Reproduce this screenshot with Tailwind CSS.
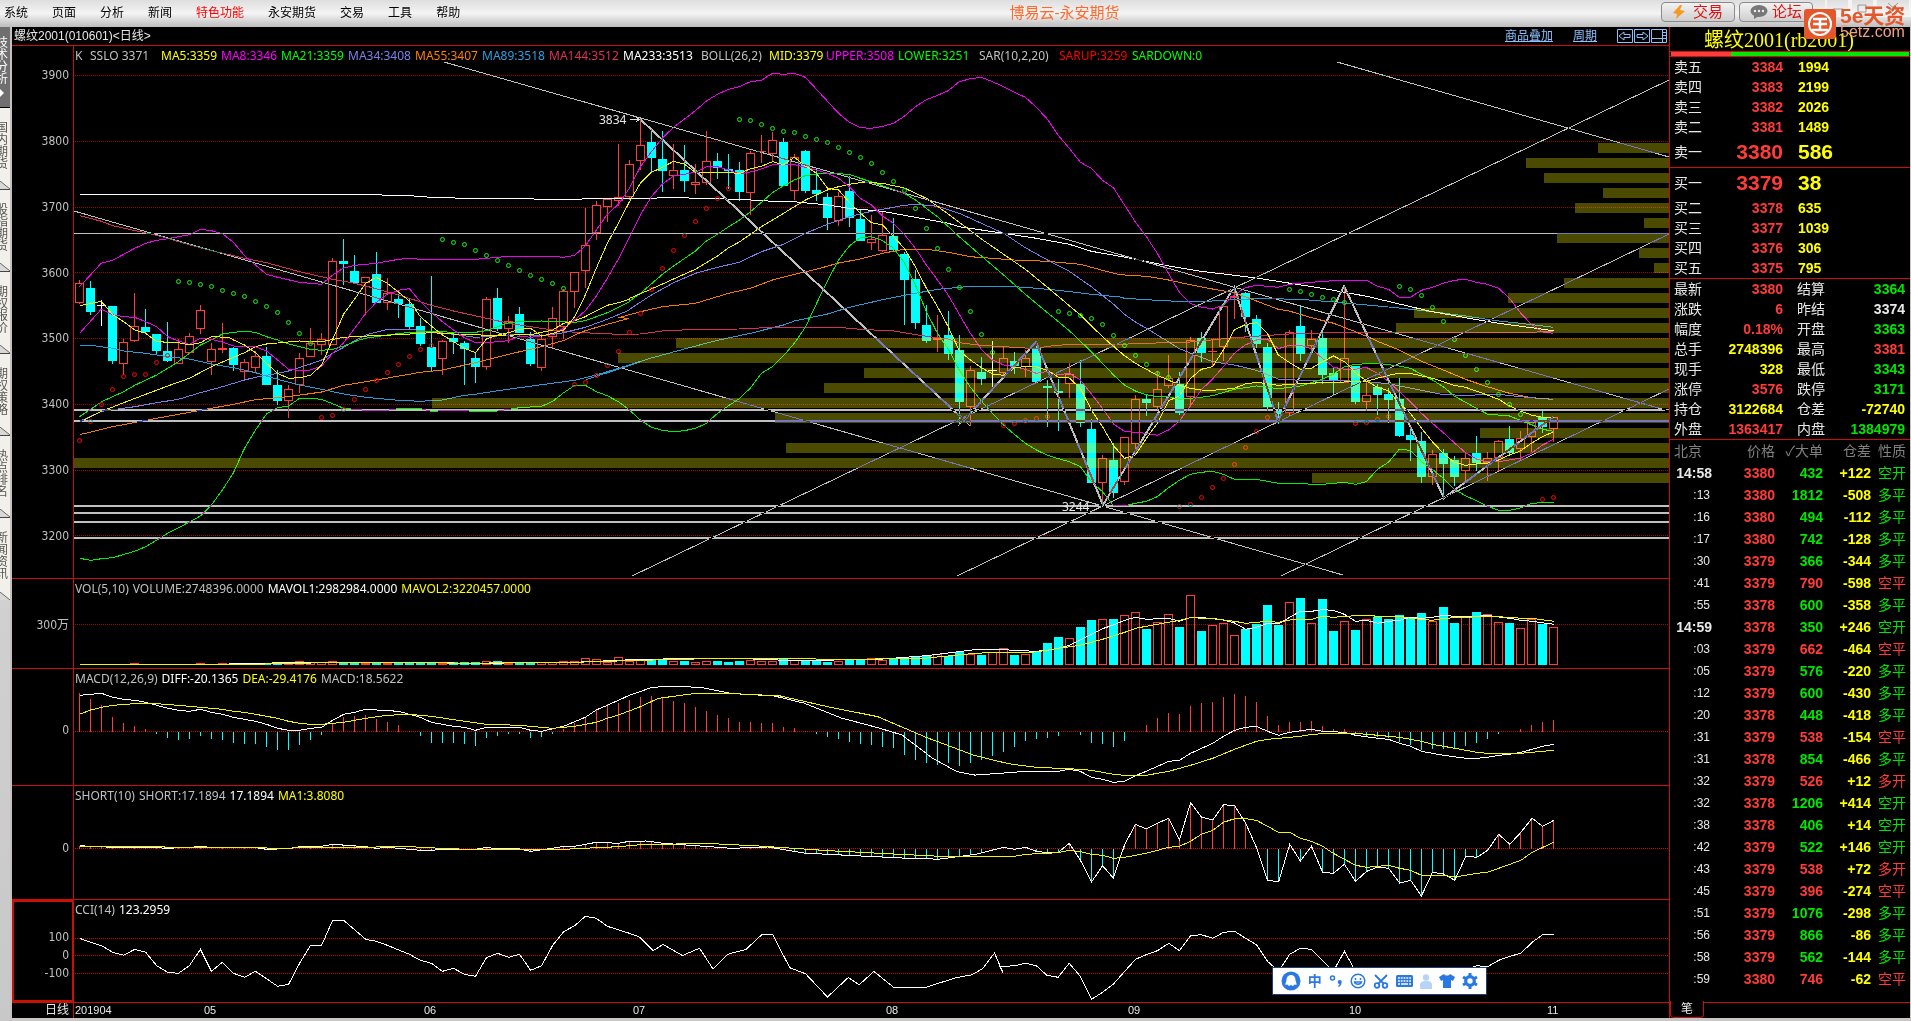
<!DOCTYPE html>
<html lang="zh-CN">
<head>
<meta charset="utf-8">
<title>博易云-永安期货</title>
<script src="https://cdn.jsdelivr.net/npm/@tailwindcss/browser@4"></script>
</head>
<body class="min-h-screen flex flex-col bg-[#cac6c6] font-['Liberation_Sans','Noto_Sans_CJK_SC',sans-serif] text-xs text-[#e8e8e8]">

<header class="h-[27px] shrink-0 flex items-start justify-between bg-linear-to-b from-[#dedede] via-[#f4f4f4] to-[#bdbdbd] text-black">
  <nav class="flex-1 flex gap-6 pl-1 leading-[26px] whitespace-nowrap">
    <a href="#">系统</a><a href="#">页面</a><a href="#">分析</a><a href="#">新闻</a><a href="#" class="text-[#ff0000]">特色功能</a><a href="#">永安期货</a><a href="#">交易</a><a href="#">工具</a><a href="#">帮助</a>
  </nav>
  <h1 class="text-[15px] leading-[26px] text-[#ff6a2c] whitespace-nowrap pl-[214px]">博易云-永安期货</h1>
  <div class="flex-1 flex justify-end gap-1 pt-0.5 relative">
    <button class="w-[74px] h-5 flex items-center justify-center gap-2 rounded border border-[#8a8a8a] bg-linear-to-b from-[#f2f2f2] to-[#cfcfcf] text-[15px] text-[#d81414]">
      <svg class="w-3 h-4" viewBox="0 0 12 16"><path d="M7 1 0 9l4 1-1 5 9-8-5-1 2-5z" fill="#f59a22"/></svg>交易</button>
    <button class="w-[74px] h-5 mr-[98px] flex items-center justify-center gap-1 rounded border border-[#8a8a8a] bg-linear-to-b from-[#f2f2f2] to-[#cfcfcf] text-[15px] text-[#d81414]">
      <svg class="w-[18px] h-4" viewBox="0 0 18 16"><ellipse cx="9" cy="7" rx="8.500" ry="6" fill="#777"/><path d="M4 11v4l5-3z" fill="#777"/><circle cx="5" cy="7" r="1.200" fill="#eee"/><circle cx="9" cy="7" r="1.200" fill="#eee"/><circle cx="13" cy="7" r="1.200" fill="#eee"/></svg>论坛</button>
    <svg class="absolute right-0 top-0 w-[86px] h-[18px]" viewBox="0 0 86 18" fill="none" stroke="#f4f4f4" stroke-width="2"><path d="M1 0v16h23V0M26 0v16h23V0M51 0v16h34V0"/><path d="M8 9h10M33 5h8v7h-8zM63 3l10 9M73 3 63 12" stroke="#999" stroke-width="1"/></svg>
    <div class="absolute right-[2px] top-[7px] z-10 flex items-start gap-1">
      <svg class="w-8 h-[30px] mt-[2px]" viewBox="0 0 32 30"><rect width="32" height="30" rx="3" fill="#e4572a"/><circle cx="16" cy="15" r="11" fill="none" stroke="#fff" stroke-width="2"/><path d="M9 10h14M16 10v11M8 21h16M9 15h14" stroke="#fff" stroke-width="2.500"/></svg>
      <div class="w-[69px] whitespace-nowrap">
        <div class="text-[21px] leading-[18px] font-bold text-[#e4572a]">5e天资</div>
        <div class="text-base leading-[14px] text-[#f0a080]">5etz.com</div>
      </div>
    </div>
  </div>
</header>

<main class="flex-1 flex">
  <aside class="w-3 shrink-0 flex flex-col border-r-2 border-[#c8c0c0] bg-linear-to-b from-[#dcdcdc] to-[#c8c8c8] text-[#555] text-xs leading-3">
    <a href="#" class="h-[81px] overflow-hidden flex flex-col items-end justify-center border-b border-black bg-[#6f6f6f] text-white pr-0.5"><span class="w-3">技术分析</span><svg class="w-1 h-2 mt-1 mr-1" viewBox="0 0 4 8"><path d="M0 0l4 4-4 4z" fill="#fff"/></svg></a>
    <a href="#" class="h-[82px] overflow-hidden flex flex-col items-end justify-between border-b border-[#444] bg-[#f1f0ea]"><span class="w-3 mr-0.5 mt-[14px]">国内期货</span><svg class="w-[10px] h-2" viewBox="0 0 10 8"><path d="M0 0l10 8H0z" fill="#d8d8d8"/><path d="M0 0l10 8" stroke="#666"/></svg></a>
    <a href="#" class="h-[82px] overflow-hidden flex flex-col items-end justify-between border-b border-[#444] bg-[#f1f0ea]"><span class="w-3 mr-0.5 mt-[14px]">股指期货</span><svg class="w-[10px] h-2" viewBox="0 0 10 8"><path d="M0 0l10 8H0z" fill="#d8d8d8"/><path d="M0 0l10 8" stroke="#666"/></svg></a>
    <a href="#" class="h-[82px] overflow-hidden flex flex-col items-end justify-between border-b border-[#444] bg-[#f1f0ea]"><span class="w-3 mr-0.5 mt-[14px]">期权报价</span><svg class="w-[10px] h-2" viewBox="0 0 10 8"><path d="M0 0l10 8H0z" fill="#d8d8d8"/><path d="M0 0l10 8" stroke="#666"/></svg></a>
    <a href="#" class="h-[82px] overflow-hidden flex flex-col items-end justify-between border-b border-[#444] bg-[#f1f0ea]"><span class="w-3 mr-0.5 mt-[14px]">期权策略</span><svg class="w-[10px] h-2" viewBox="0 0 10 8"><path d="M0 0l10 8H0z" fill="#d8d8d8"/><path d="M0 0l10 8" stroke="#666"/></svg></a>
    <a href="#" class="h-[82px] overflow-hidden flex flex-col items-end justify-between border-b border-[#444] bg-[#f1f0ea]"><span class="w-3 mr-0.5 mt-[14px]">热点排名</span><svg class="w-[10px] h-2" viewBox="0 0 10 8"><path d="M0 0l10 8H0z" fill="#d8d8d8"/><path d="M0 0l10 8" stroke="#666"/></svg></a>
    <a href="#" class="h-[82px] overflow-hidden flex flex-col items-end justify-between bg-[#f1f0ea]"><span class="w-3 mr-0.5 mt-[14px]">新闻资讯</span><svg class="w-[10px] h-2" viewBox="0 0 10 8"><path d="M0 0l10 8H0z" fill="#d8d8d8"/><path d="M0 0l10 8" stroke="#666"/></svg></a>
  </aside>

  <section class="relative flex-1 min-w-0 mb-[3px] grid grid-rows-[19px_minmax(0,533fr)_minmax(0,90fr)_minmax(0,117fr)_minmax(0,114fr)_minmax(0,103fr)_15px] bg-black">
    <div class="flex items-center justify-between border-b border-[#c81008] pl-0.5 pr-px leading-[18px] whitespace-nowrap">
      <h2>螺纹2001(010601)&lt;日线&gt;</h2>
      <div class="flex items-center gap-5 text-[#8cc0ff]">
        <a href="#" class="underline">商品叠加</a><a href="#" class="underline">周期</a>
        <svg class="w-[51px] h-[15px]" viewBox="0 0 51 15" fill="none" stroke="#8cc0ff"><path d="M.5.500h15v13H.500zM17.500.500h15v13h-15zM34.500.500h15v13h-15zM34.500 9.500h11M45.500.500v13M46 3.500h4M46 6.500h4M46 9.500h4"/><path d="M2 7l5-4v2.500h6v3H7V11zM31 7l-5-4v2.500h-6v3h6V11z"/></svg>
      </div>
    </div>

    <div class="grid grid-cols-[62px_minmax(0,1fr)] border-b border-[#c81008] font-['DejaVu_Sans_Condensed','Noto_Sans_CJK_SC',sans-serif]">
      <div class="flex flex-col justify-between items-end border-r border-[#c81008] pt-[21px] pb-[34px] pr-1 leading-4 text-[#c0c0c0]"><span>3900</span><span>3800</span><span>3700</span><span>3600</span><span>3500</span><span>3400</span><span>3300</span><span>3200</span></div>
      <div class="relative overflow-hidden pt-0.5 pl-px font-['Noto_Sans',sans-serif]">
        <svg id="price" class="absolute inset-0 size-full" viewBox="74 46 1595 532" preserveAspectRatio="none" shape-rendering="crispEdges" fill="none"></svg>
        <div class="relative flex leading-4 whitespace-nowrap text-[#c0c0c0]"><span class="w-[15px]">K</span><span class="w-[71px]">SSLO 3371</span><span class="w-[60px] text-[#ffff00]">MA5:3359</span><span class="w-[60px] text-[#ff00ff]">MA8:3346</span><span class="w-[67px] text-[#00ff00]">MA21:3359</span><span class="w-[67px] text-[#7f7fef]">MA34:3408</span><span class="w-[67px] text-[#ff7f00]">MA55:3407</span><span class="w-[67px] text-[#2fa0e0]">MA89:3518</span><span class="w-[74px] text-[#df3058]">MA144:3512</span><span class="w-[78px] text-white">MA233:3513</span><span class="w-[68px]">BOLL(26,2)</span><span class="w-[57px] text-[#ffff00]">MID:3379</span><span class="w-[72px] text-[#ff00ff]">UPPER:3508</span><span class="w-[81px] text-[#00ff00]">LOWER:3251</span><span class="w-20">SAR(10,2,20)</span><span class="w-[73px] text-[#ff0000]">SARUP:3259</span><span class="text-[#00ff00]">SARDOWN:0</span></div>
      </div>
    </div>

    <div class="grid grid-cols-[62px_minmax(0,1fr)] border-b border-[#c81008] font-['DejaVu_Sans_Condensed','Noto_Sans_CJK_SC',sans-serif]">
      <div class="flex items-center justify-end border-r border-[#c81008] pt-0.5 pr-1 text-[#c0c0c0]">300万</div>
      <div class="relative overflow-hidden pt-0.5 pl-px font-['Noto_Sans',sans-serif]">
        <svg id="vol" class="absolute inset-0 size-full" viewBox="74 579 1595 89" preserveAspectRatio="none" shape-rendering="crispEdges" fill="none"></svg>
        <div class="relative flex gap-1 leading-4 whitespace-nowrap text-[#c0c0c0]"><span>VOL(5,10)</span><span>VOLUME:2748396.0000</span><span class="text-white">MAVOL1:2982984.0000</span><span class="text-[#ffff00]">MAVOL2:3220457.0000</span></div>
      </div>
    </div>

    <div class="grid grid-cols-[62px_minmax(0,1fr)] border-b border-[#c81008] font-['DejaVu_Sans_Condensed','Noto_Sans_CJK_SC',sans-serif]">
      <div class="flex items-center justify-end border-r border-[#c81008] pt-1.5 pr-1 text-[#c0c0c0]">0</div>
      <div class="relative overflow-hidden pt-0.5 pl-px font-['Noto_Sans',sans-serif]">
        <svg id="macd" class="absolute inset-0 size-full" viewBox="74 669 1595 116" preserveAspectRatio="none" shape-rendering="crispEdges" fill="none"></svg>
        <div class="relative flex gap-1 leading-4 whitespace-nowrap text-[#c0c0c0]"><span>MACD(12,26,9)</span><span class="text-white">DIFF:-20.1365</span><span class="text-[#ffff00]">DEA:-29.4176</span><span>MACD:18.5622</span></div>
      </div>
    </div>

    <div class="grid grid-cols-[62px_minmax(0,1fr)] border-b border-[#c81008] font-['DejaVu_Sans_Condensed','Noto_Sans_CJK_SC',sans-serif]">
      <div class="flex items-center justify-end border-r border-[#c81008] pt-2.5 pr-1 text-[#c0c0c0]">0</div>
      <div class="relative overflow-hidden pt-0.5 pl-px font-['Noto_Sans',sans-serif]">
        <svg id="short" class="absolute inset-0 size-full" viewBox="74 786 1595 113" preserveAspectRatio="none" shape-rendering="crispEdges" fill="none"></svg>
        <div class="relative flex gap-1 leading-4 whitespace-nowrap text-[#c0c0c0]"><span>SHORT(10)</span><span>SHORT:17.1894</span><span class="text-white">17.1894</span><span class="text-[#ffff00]">MA1:3.8080</span></div>
      </div>
    </div>

    <div class="grid grid-cols-[62px_minmax(0,1fr)] border-b border-[#c81008] font-['DejaVu_Sans_Condensed','Noto_Sans_CJK_SC',sans-serif]">
      <div class="flex flex-col justify-center items-end border-2 border-[#c81008] pt-2 pr-[3px] leading-[18px] text-[#c0c0c0]"><span>100</span><span>0</span><span>-100</span></div>
      <div class="relative overflow-hidden pt-0.5 pl-px font-['Noto_Sans',sans-serif]">
        <svg id="cci" class="absolute inset-0 size-full" viewBox="74 900 1595 102" preserveAspectRatio="none" shape-rendering="crispEdges" fill="none"></svg>
        <div class="relative flex gap-1 leading-4 whitespace-nowrap text-[#c0c0c0]"><span>CCI(14)</span><span class="text-white">123.2959</span></div>
      </div>
    </div>

    <div class="grid grid-cols-[62px_minmax(0,1fr)] leading-[15px]">
      <div class="border-r border-[#c81008] text-right pr-1">日线</div>
      <div class="grid grid-cols-[129fr_220fr_209fr_253fr_242fr_221fr_198fr_122fr] pl-px text-[11px]"><span>201904</span><span>05</span><span>06</span><span>07</span><span>08</span><span>09</span><span>10</span><span>11</span></div>
    </div>

    <div class="absolute right-[182px] bottom-[23px] w-[215px] h-7 flex items-center justify-around px-1 border border-[#1d3f78] bg-white text-[#2a79e2]">
      <svg class="size-5" viewBox="0 0 20 20"><circle cx="10" cy="10" r="9.500" fill="#2a79e2"/><path d="M10 4c-3 0-4.500 2.500-4.500 5 0 2-1.500 3-1 5l2-.500L8 15l2-1 2 1 1.500-1.500 2 .500c.500-2-1-3-1-5C14.500 6.500 13 4 10 4z" fill="#fff"/></svg>
      <span class="text-sm font-bold">中</span>
      <svg class="size-[14px]" viewBox="0 0 14 14"><circle cx="3.500" cy="4" r="2" fill="none" stroke="#2a79e2" stroke-width="1.500"/><path d="M9 7a2 2 0 1 1 3.500 2c0 2-1.500 3.500-3 4l-.500-1c1-.500 1.500-1 1.500-2A2 2 0 0 1 9 7z" fill="#2a79e2"/></svg>
      <svg class="size-4" viewBox="0 0 16 16" fill="none" stroke="#2a79e2" stroke-width="1.500"><circle cx="8" cy="8" r="6.800"/><path d="M4.500 9c1 3 6 3 7 0z"/><path d="M5.500 5v2M10.500 5v2"/></svg>
      <svg class="size-4" viewBox="0 0 16 16" fill="none" stroke="#2a79e2" stroke-width="1.800"><circle cx="4" cy="12.500" r="2.300"/><circle cx="12" cy="12.500" r="2.300"/><path d="M2 2l9 9M14 2l-9 9"/></svg>
      <svg class="w-[17px] h-3" viewBox="0 0 17 12"><rect width="17" height="12" rx="1.500" fill="#2a79e2"/><path d="M2 3h13M2 6h13" stroke="#fff" stroke-width="1.600" stroke-dasharray="1.800 1"/><path d="M2 9h2M5 9h7M13 9h2" stroke="#fff" stroke-width="1.500"/></svg>
      <svg class="w-3 h-[15px]" viewBox="0 0 12 15" fill="#b9d3f7"><circle cx="6" cy="3.500" r="3.200"/><path d="M0 15v-4c0-3 2-4 6-4s6 1 6 4v4z"/></svg>
      <svg class="w-4 h-[14px]" viewBox="0 0 16 14"><path d="M5 0 0 3l2 4 2-1v8h8V6l2 1 2-4-5-3c-1 2-5 2-6 0z" fill="#2a79e2"/></svg>
      <svg class="size-4" viewBox="0 0 16 16"><circle cx="8" cy="8" r="4.300" fill="none" stroke="#2a79e2" stroke-width="3.200"/><path d="M8 0v3M8 13v3M1 4l2.600 1.500M12.400 10.500 15 12M1 12l2.600-1.500M12.400 5.500 15 4" stroke="#2a79e2" stroke-width="3"/></svg>
    </div>
  </section>

  <section class="w-[241px] shrink-0 mb-[3px] mr-px flex flex-col border-l border-[#c81008] bg-black text-sm">
    <h2 class="h-6 pt-0.5 pl-[34px] text-xl leading-[22px] font-['Liberation_Serif','Noto_Sans_CJK_SC',serif] text-[#ffff00] whitespace-nowrap">螺纹2001(rb2001)</h2>
    <div class="h-[6px] flex border-y border-[#c81008] px-px"><div class="w-1/4 bg-[#ff3c39]"></div><div class="flex-1 bg-[#00e600]"></div></div>
    <table class="w-full table-fixed text-left leading-5">
      <colgroup><col class="w-[50px]"><col class="w-[63px]"><col></colgroup>
      <tbody id="asks"></tbody>
    </table>
    <table class="w-full table-fixed text-left leading-5 border-y border-[#c81008]">
      <colgroup><col class="w-[50px]"><col class="w-[63px]"><col></colgroup>
      <tbody id="bids"></tbody>
    </table>
    <table class="w-full table-fixed leading-5 border-b border-[#c81008]">
      <colgroup><col class="w-9"><col class="w-[77px]"><col class="w-[46px]"><col></colgroup>
      <tbody id="quote"></tbody>
    </table>
    <table class="w-full table-fixed leading-[22px] text-right">
      <colgroup><col class="w-[42px]"><col class="w-[63px]"><col class="w-12"><col class="w-12"><col></colgroup>
      <thead><tr class="text-[#808080] h-[22px]"><th class="font-normal text-left pl-1">北京</th><th class="font-normal">价格</th><th class="font-normal whitespace-nowrap">✓大单</th><th class="font-normal">仓差</th><th class="font-normal pr-1">性质</th></tr></thead>
      <tbody id="ticks"></tbody>
    </table>
    <div class="flex-1 flex items-end">
      <button class="w-[34px] h-[17px] rounded-b border-x border-b border-[#c81008] text-xs leading-4">笔</button>
      <div class="flex-1 h-4 border-t border-[#c81008]"></div>
    </div>
  </section>
</main>

<script>
// ---- order book and trade tables ----
const RED = 'text-[#ff3c39]', GREEN = 'text-[#00e600]', YEL = 'text-[#ffff00]', WHITE = 'text-[#e8e8e8]';
const book = (id, rows) => document.getElementById(id).innerHTML = rows.map(([l, p, v, big]) =>
  `<tr class="${big ? 'h-[30px]' : 'h-5'}"><th class="font-normal pl-1">${l}</th><td class="text-right font-bold ${RED} ${big ? 'text-[21px]' : ''}">${p}</td><td class="pl-[15px] font-bold ${YEL} ${big ? 'text-[21px]' : ''}">${v}</td></tr>`).join('');
book('asks', [['卖五',3384,1994],['卖四',3383,2199],['卖三',3382,2026],['卖二',3381,1489],['卖一',3380,586,1]]);
book('bids', [['买一',3379,38,1],['买二',3378,635],['买三',3377,1039],['买四',3376,306],['买五',3375,795]]);
document.getElementById('quote').innerHTML = [
  ['最新','3380',RED,'结算','3364',GREEN],['涨跌','6',RED,'昨结','3374',WHITE],['幅度','0.18%',RED,'开盘','3363',GREEN],
  ['总手','2748396',YEL,'最高','3381',RED],['现手','328',YEL,'最低','3343',GREEN],['涨停','3576',RED,'跌停','3171',GREEN],
  ['持仓','3122684',YEL,'仓差','-72740',YEL],['外盘','1363417',RED,'内盘','1384979',GREEN]
].map(r => `<tr class="h-5"><th class="font-normal text-left pl-1">${r[0]}</th><td class="text-right font-bold ${r[2]}">${r[1]}</td><th class="font-normal text-right pr-1">${r[3]}</th><td class="text-right font-bold pr-[5px] ${r[5]}">${r[4]}</td></tr>`).join('');
document.getElementById('ticks').innerHTML = `14:58 3380 432 +122 空开 g
:13 3380 1812 -508 多平 g
:16 3380 494 -112 多平 g
:17 3380 742 -128 多平 g
:30 3379 366 -344 多平 g
:41 3379 790 -598 空平 r
:55 3378 600 -358 多平 g
14:59 3378 350 +246 空开 g
:03 3379 662 -464 空平 r
:05 3379 576 -220 多平 g
:12 3379 600 -430 多平 g
:20 3378 448 -418 多平 g
:31 3379 538 -154 空平 r
:31 3378 854 -466 多平 g
:32 3379 526 +12 多开 r
:32 3378 1206 +414 空开 g
:38 3378 406 +14 空开 g
:42 3379 522 +146 空开 g
:43 3379 538 +72 多开 r
:45 3379 396 -274 空平 r
:51 3379 1076 -298 多平 g
:56 3379 866 -86 多平 g
:58 3379 562 -144 多平 g
:59 3380 746 -62 空平 r`.split('\n').map(l => {
  const [t, p, v, d, k, c] = l.split(' '), col = c === 'r' ? RED : GREEN;
  return `<tr class="h-[22px] font-bold"><td class="${t.length > 3 ? '' : 'text-xs font-normal pr-0.5'}">${t}</td><td class="${RED}">${p}</td><td class="${col}">${v}</td><td class="${YEL}">${d}</td><td class="pr-1 font-normal ${col}">${k}</td></tr>`;
}).join('');

// ---- chart drawing ----
// Curve points are kept in blocks; a block letter gives origin x, origin y, x scale, y scale.
const BLOCK = {A:[0,0,2.45,3],B:[0,340,2.45,3],C:[560,40,2.8,3],D:[560,300,2.8,3],E:[1110,40,2.751,3],F:[1110,300,2.751,3],G:[1000,580,2.34,3],H:[0,580,2.45,3],T:[0,0,0.8205,0.8205]};
const pts = s => { let b; const out = []; for (const t of s.trim().split(/\s+/)) { if (BLOCK[t]) b = BLOCK[t]; else { const [x, y] = t.split(',').map(Number); out.push([b[0] + x / b[2], b[1] + y / b[3]]); } } return out; };
const add = (id, html) => document.getElementById(id).insertAdjacentHTML('beforeend', html);
const curve = (id, color, s, w = 1) => add(id, `<polyline stroke="${color}" stroke-width="${w}" points="${pts(s).map(p => p.map(v => v.toFixed(1)).join()).join(' ')}"/>`);
const X = i => 79 + 11 * i, R = '#ff3c39', CY = '#00ffff';
const dots = (id, ys, color) => ys.forEach(y => add(id, `<path d="M75 ${y}.500H1669" stroke="${color}" stroke-dasharray="1 1"/>`));
dots('price', [75,141,207,272,338,404,470,535], '#a80000');
dots('vol', [624], '#a80000'); dots('macd', [731], '#e00000'); dots('short', [848], '#e00000'); dots('cci', [938,955,973], '#e00000');

// type, high, body top, body bottom, low
const K = `r280,283,303,304 c281,288,312,315 w300,305,305,326 c306,306,361,364 r339,342,364,375 r293,326,341,342 c309,327,332,333 c334,334,351,355 c322,351,361,362 r339,349,364,364 r333,336,353,354 r305,310,329,334 r343,349,362,375 r323,348,350,353 c347,348,365,371 r359,362,372,380 r351,356,368,373 c347,356,385,385 c370,385,401,405 r385,389,401,418 r353,358,385,393 r328,343,357,357 r333,339,345,355 r258,261,345,345 c239,261,264,285 c255,271,283,283 r277,277,283,315 c252,274,303,303 r278,293,303,310 c294,299,304,318 c298,304,327,329 c318,326,344,346 c276,347,367,372 r340,341,359,375 c332,338,342,354 c341,343,349,385 c353,358,367,383 r297,299,367,370 c288,298,329,331 r316,321,329,343 c307,314,333,333 c332,339,364,366 r334,339,368,371 r307,318,337,348 r289,291,327,339 r272,272,292,308 r208,245,271,288 r201,205,233,240 r199,199,207,222 r144,197,201,206 r160,164,197,200 r119,145,161,170 c129,142,158,173 c131,159,171,192 r144,170,176,189 c145,170,181,192 r164,182,185,194 r131,161,183,185 c153,161,168,179 c154,169,171,189 c162,170,192,201 r151,153,193,215 r135,151,151,163 r132,140,154,161 c138,142,186,186 r154,157,191,200 c150,151,191,193 c169,190,194,201 c193,197,218,230 r192,196,221,226 c176,191,218,227 c210,219,241,241 r215,239,243,250 r211,235,251,252 c218,236,250,251 c252,254,280,325 c270,279,323,329 c305,325,341,343 r315,338,340,352 c311,335,354,360 c335,350,402,425 r366,370,407,426 c357,372,379,385 w341,370,370,387 r347,358,373,378 c352,361,366,374 r350,358,367,377 c342,348,382,383 c380,386,388,427 c379,391,393,431 r363,374,384,398 c360,384,423,427 c419,429,483,483 r455,458,483,506 c443,460,493,498 r437,437,482,485 r395,399,444,454 c394,399,403,416 r371,389,407,410 r355,378,386,388 c372,384,413,415 r337,340,397,407 c332,338,353,362 r339,351,352,367 r305,306,347,361 r288,296,298,319 c292,293,317,332 c315,319,344,348 c343,347,407,411 c402,411,414,424 r330,332,413,417 c307,326,354,361 r330,339,346,353 c332,338,375,384 c367,373,381,396 r286,358,383,383 c366,366,402,404 r381,395,402,411 c384,387,395,415 c388,394,400,423 c378,399,436,437 c427,435,440,461 c432,441,477,483 r450,454,477,485 c449,453,464,500 c456,460,477,486 r453,458,471,481 c436,453,463,471 r452,458,463,481 r440,441,458,471 c426,439,453,454 r431,438,449,460 r420,422,437,452 c411,417,427,433 r417,417,429,442`.split(' ').map(s => [s[0], ...s.slice(1).split(',').map(Number)]);
K.forEach(([t, h, a, b, l], i) => {
  const x = X(i), c = t === 'r' ? R : t === 'c' ? CY : '#fff';
  add('price', `<path d="M${x + .5} ${h}V${l}" stroke="${c}"/>` + (t === 'c' ? `<rect x="${x - 4}" y="${a}" width="9" height="${Math.max(b - a, 1)}" fill="${c}"/>` : b - a < 2 ? `<path d="M${x - 4} ${a + .5}h9" stroke="${c}"/>` : `<rect x="${x - 3.5}" y="${a + .5}" width="8" height="${b - a - 1}" fill="#000" stroke="${c}"/>`));
});

curve('price', '#299bd6', 'B 195,16 222,16 276,25 303,33 357,40 411,50 464,57 518,72 572,83 626,98 680,118 734,135 788,148 842,162 896,172 976,181 1030,184 1084,180 1138,166 1165,163 1219,152 1327,134 1408,121 1461,105 1515,85 1569,64 D 72,239 133,218 195,196 256,174 348,147 441,121 533,100 626,75 656,63 749,42 810,22 900,0 C 964,766 1057,748 1149,739 1242,739 1303,742 1396,751 1488,763 1568,771 E 40,775 130,781 221,786 282,783 342,778 433,776 524,778 615,786 706,795 796,804 887,815 978,828 1069,843 1129,850 1220,862');
curve('price', '#d6305a', 'A 195,647 249,664 276,677 384,706 464,734 518,752 572,767 599,775 653,788 734,815 815,838 869,850 922,866 976,885 1057,916 1111,933 1192,955 1246,970 1300,980 1354,990 1408,997 1461,1000 1515,1003 1569,1002 C 287,873 379,868 502,867 595,862 780,862 841,868 934,873 1026,889 1087,897 D 1118,128 1180,136 1272,142 1334,146 1365,139 1426,133 1568,133 F 100,130 221,126 342,113 493,102 615,98 796,97 1160,97 1220,93');
curve('price', '#f57c00', 'B 195,284 276,260 384,235 491,211 572,193 626,179 707,170 788,156 842,136 922,120 1030,97 1084,90 1165,68 1246,43 1327,20 1385,0 A 1408,1005 1434,992 1488,973 1542,955 C 164,833 225,815 287,800 379,790 472,760 533,745 595,720 656,703 718,688 780,669 841,657 903,640 964,628 1026,628 1087,637 1149,650 1272,660 1365,664 1457,673 1519,691 1568,704 E 40,705 100,709 161,720 221,734 282,747 342,758 403,783 463,808 493,813 554,833 615,850 675,875 715,893 F 736,124 796,150 857,184 917,210 978,238 1038,260 1099,280 1159,293 1220,298');
curve('price', '#7b7be7', 'B 195,244 249,214 330,200 384,188 437,178 491,158 545,140 599,120 626,112 680,100 707,93 761,72 788,60 815,40 842,22 869,2 A 896,1005 949,988 1003,988 1057,995 1111,1003 1165,1012 1219,1008 1273,1003 1327,1008 1381,998 1434,982 1488,958 1542,930 C 195,808 256,765 318,728 379,700 441,682 502,667 564,635 626,613 687,580 749,553 810,530 872,514 903,508 964,496 1000,493 1057,499 1118,520 1180,550 1242,580 1303,623 1365,660 1426,694 1488,740 1550,793 E 40,823 70,846 100,865 F 130,105 161,125 191,146 251,172 282,185 342,195 403,211 463,237 524,241 615,241 706,245 766,251 857,271 917,284 978,286 1069,283 1129,290 1190,296 1220,298');
curve('price', '#fff', 'A 195,583 922,583 949,587 1003,587 1057,592 1138,595 1300,596 1327,599 1408,599 1434,596 1569,596 C 318,472 379,475 502,478 595,484 656,485 749,495 810,505 903,514 995,532 1087,550 1118,560 1242,580 1334,595 1426,613 1488,634 1568,649 E 70,658 161,678 251,694 403,714 584,745 645,757 706,769 796,792 887,815 978,833 1069,850 1160,863 1220,872');
curve('price', '#00f000', 'B 195,230 222,208 249,185 303,155 330,136 384,105 437,65 464,40 491,15 518,0 A 545,1002 572,997 599,994 626,997 653,1010 B 680,0 707,12 734,20 761,28 788,31 815,28 842,18 880,0 A 895,1015 949,1005 1003,997 1057,994 1111,997 1165,997 1192,992 1219,980 1246,968 1273,965 1327,963 1408,967 1434,962 1488,938 1542,905 C 195,783 225,760 287,703 318,678 379,633 410,603 441,583 472,560 502,541 533,515 564,487 595,458 626,437 656,420 687,407 718,402 749,400 810,403 841,415 903,437 964,460 995,480 1057,530 1118,590 1180,648 1242,705 1303,763 1365,818 D 1426,92 1488,155 1550,225 F 40,255 70,273 100,284 130,290 161,290 191,298 251,292 282,287 342,268 403,258 463,266 524,258 584,238 615,222 645,200 675,193 736,190 796,198 826,205 887,240 917,260 947,288 1008,325 1038,342 1099,348 1159,374 1190,388 1220,394');
curve('price', '#00f000', 'B 195,655 222,661 249,656 276,653 330,634 357,620 411,580 464,546 491,528 518,495 545,450 572,398 599,325 626,270 653,222 680,203 707,198 734,175 761,175 788,178 842,205 896,211 949,211 976,206 1030,206 1057,214 1111,211 1165,214 1219,213 1273,203 1327,199 1354,184 1381,158 1408,136 1434,136 1461,155 1488,167 1515,185 1542,210 1569,240 D 256,382 287,391 318,395 348,392 379,385 410,370 441,340 472,317 502,296 533,264 564,220 595,200 626,167 656,130 687,82 723,0 C 749,722 780,660 810,618 841,593 872,590 903,602 934,625 964,668 995,735 1026,815 1057,880 D 1087,147 1118,210 1149,262 1180,303 1211,340 1242,375 1272,403 1303,430 1334,450 1365,466 1396,476 1426,485 1457,500 1488,545 1519,575 1550,617 F 40,618 70,610 100,604 130,590 161,563 191,541 221,523 251,517 282,514 312,523 342,538 403,538 463,550 524,550 554,553 584,553 645,547 675,553 705,545 736,508 766,487 796,448 826,451 857,485 887,508 917,535 947,568 978,587 1008,602 1038,618 1069,631 1099,631 1129,624 1159,610 1190,608 1220,607');
curve('price', '#f4f400', 'B 195,247 249,214 303,188 357,163 411,138 464,115 518,80 572,52 599,38 626,20 653,12 680,9 734,3 788,5 A 842,1012 900,1008 976,1004 1057,998 1138,1004 1219,1006 1300,1004 1354,990 1381,970 1408,962 1434,950 1461,932 1488,916 1515,908 1542,898 C 195,775 256,747 318,717 379,688 441,648 472,623 502,606 564,560 626,520 687,480 749,450 780,440 810,433 849,427 903,430 964,444 1026,475 1087,522 1118,547 1180,597 1242,643 1303,688 1365,742 1426,797 1457,825 D 1519,110 F 0,130 40,167 70,190 100,208 130,226 161,240 191,256 221,265 251,270 282,271 342,265 372,252 403,247 463,256 524,251 584,248 645,246 705,244 766,226 796,220 826,220 887,235 947,256 978,262 1038,285 1069,298 1099,318 1129,333 1159,345 1190,352 1220,354');
curve('price', '#f000f0', 'A 195,860 248,790 276,781 330,745 357,730 384,721 411,716 464,704 491,688 518,692 545,701 572,727 599,767 626,795 653,823 680,832 734,847 788,853 815,825 842,804 869,796 922,790 976,778 1003,775 1030,778 1165,778 1246,769 1354,769 1381,772 1408,766 1434,738 1461,690 1488,643 1515,613 1542,565 C 225,380 256,335 287,294 318,262 379,212 410,183 441,163 472,148 502,140 533,125 564,121 595,100 626,103 656,100 687,112 718,148 749,184 780,220 810,247 841,263 872,265 903,259 934,250 964,229 995,200 1026,179 1057,166 1087,152 1118,125 1149,116 1180,112 1211,125 1242,140 1272,157 1303,172 1334,202 1365,238 1396,287 1426,325 1457,367 1488,385 1519,421 1550,444 E 40,495 70,546 100,590 130,640 161,700 191,757 221,790 251,801 282,807 312,795 342,765 372,743 403,736 463,742 493,733 524,730 584,724 645,721 706,721 736,739 766,748 796,772 826,772 857,751 887,742 917,730 947,721 978,718 1008,727 1038,733 1069,745 1099,775 1129,818 1159,853 1190,876 1220,880');
curve('price', '#f000f0', 'A 195,1000 248,928 276,944 303,950 330,952 357,965 384,980 411,1010 B 437,3 464,13 491,-5 518,-2 545,6 572,18 599,20 626,20 653,33 680,60 707,88 734,91 761,90 788,78 815,40 842,8 A 869,985 896,940 922,907 949,883 976,871 1003,866 1030,905 1057,937 1084,965 1111,990 1138,1013 B 1165,8 1192,8 1246,2 A 1273,1008 1300,1012 1354,1003 1381,985 1408,960 1434,932 1461,888 1488,835 1515,777 1542,712 C 225,525 256,470 287,432 318,408 348,403 379,397 410,380 441,380 472,390 502,402 533,396 564,387 595,374 656,374 687,382 718,390 749,400 780,415 810,440 841,475 872,495 903,528 934,550 964,583 995,625 1026,675 1057,720 1087,765 1118,823 D 1149,100 1180,148 1211,180 1242,195 1272,200 1303,208 1334,220 1365,214 1396,224 1426,220 1457,240 1488,282 1519,325 1550,372 F 40,394 70,397 100,400 130,406 161,390 191,363 221,318 251,270 282,237 312,200 342,160 372,135 403,120 433,117 463,146 493,136 524,136 554,146 584,175 615,202 645,208 675,208 705,202 736,220 766,244 796,275 826,305 857,340 887,370 917,398 947,428 978,458 1008,477 1038,486 1069,485 1099,480 1129,474 1159,460 1190,435 1220,418');
curve('price', '#f4f400', 'A 195,917 248,904 276,944 303,965 330,990 357,1000 384,1025 B 437,8 464,15 491,8 518,-10 560,-8 572,0 599,15 626,38 653,70 680,100 707,115 734,113 761,106 788,75 A 815,1018 842,942 869,897 896,850 922,832 949,850 976,876 1003,903 1030,950 1057,978 1084,1005 B 1111,5 1138,25 1165,38 1192,-3 A 1219,1005 1246,998 1273,988 1300,985 1327,1008 1354,1000 1381,990 1408,950 1434,885 1461,805 1488,730 1515,670 1542,605 C 225,430 256,397 287,382 318,364 348,372 379,397 410,399 441,398 472,397 502,401 533,386 564,379 595,365 626,374 656,352 687,378 718,400 749,445 780,450 810,487 841,520 872,548 903,555 934,590 964,625 995,680 1026,745 1057,800 1087,860 D 1118,152 1149,180 1180,203 1211,222 1242,226 1272,204 1303,199 1334,200 1365,212 1396,232 1426,234 1457,265 1488,330 1519,380 1550,437 F 40,475 70,465 100,415 130,370 161,302 191,288 221,236 251,208 282,200 312,150 342,90 372,74 403,68 433,100 463,165 493,187 524,208 554,205 584,185 615,168 645,185 675,218 705,243 736,262 766,272 796,310 826,340 857,385 887,425 917,460 947,487 978,496 1008,492 1038,490 1069,480 1099,465 1129,453 1159,430 1190,410 1220,395');

// parabolic SAR marks: colour, y origin, first bar, y values
[['g',0,9,'842,845,851,857,869,878,887,902,917,935,965,998,1030'],['g',0,33,'718,727,733,751,766,781,796,811,826,838,850,863'],
 ['g',40,60,'238,241,253,265,274,277,289,298,307,322,337,352,370,397,424,451,505,565,625,688,742,814,881,937'],
 ['g',300,89,'34,40,46,55,73,106,136,166,193,220,230'],['g',40,110,'748,754,763,772,778,787'],
 ['g',40,120,'739,748,766,802,844,898,946,988,1027,1063,1093,1123,1147'],
 ['r',340,0,'301,244,193,148,109,103,103,67,46'],['r',340,22,'232,226,208,178,148,121,97,73,49,28,16'],['r',340,45,'133,127,106,76,34'],
 ['r',40,50,'875,818,748,685,631,586,544,505,475,445'],['r',300,84,'376,370,361,355,349'],['r',300,100,'619,613,592,562,535,493,442,394,352'],
 ['r',300,116,'370,367,356,349'],['r',300,133,'598,592']
].forEach(([c, oy, i0, ys]) => ys.split(',').forEach((y, k) => add('price', `<circle cx="${X(i0 + k) + .5}" cy="${Math.round(oy + y / 3) + .5}" r="2" shape-rendering="geometricPrecision" stroke="${c === 'g' ? '#00ff00' : '#ff0000'}"/>`)));

// volume-by-price bars, 15px apart
[1598,1526,1544,1603,1575,1644,1557,1639,1654,1564,1508,1414,1396,676,618,864,824,432,775,1480,786,74,1312].forEach((x, k) =>
  add('price', `<rect x="${x}" y="${143 + 15 * k}" width="${1669 - x}" height="10" fill="#ffff00" fill-opacity=".29"/>`));

// user-drawn lines invert what they cross
const draw = (d, w) => add('price', `<path d="${d}" stroke="#c0c0c0" stroke-width="${w}" class="mix-blend-difference"/>`);
draw('M74 233.500H1669', 1);
[410,421,506,513,522,538].forEach(y => draw(`M74 ${y}H1669`, 2));
['M444 62 1669 411','M74 211 1343 575','M1337 62 1669 157','M632 576 1669 80','M957 576 1669 234','M1281 576 1669 389'].forEach(d => draw(d, 1));
draw('M640 119 964 420 1036 342 1103 505 1234 287 1278 421 1344 286 1444 498 1553 417', 2);
draw('M958 414l12 12M970 414l-12 12M957 420h14', 1);
add('price', '<path d="M630 119.500h8M636 117l3 2.500-3 2.500" stroke="#ddd"/><g fill="#e8e8e8" font-size="12"><text x="599" y="124">3834</text><text x="1062" y="511">3244</text></g>');

// volume
const V = '251,252,252,252,252,249,252,252,252,252,252,249,252,249,252,252,252,252,246,247,244,247,246,244,247,248,248,247,248,247,247,247,247,248,247,246,247,244,244,248,246,247,247,247,244,244,235,238,246,232,244,240,238,240,244,244,246,242,243,245,244,240,244,243,238,240,244,242,245,243,240,237,234,240,236,232,230,225,222,228,215,222,226,217,205,225,223,217,189,171,175,141,120,118,117,106,97,147,127,103,141,46,153,136,130,166,147,132,75,135,67,54,130,57,153,124,150,118,111,117,105,111,99,124,81,129,112,96,103,127,129,145,117,132,142'.split(',').map(Number);
V.forEach((v, i) => { const y = Math.round(580 + v / 3); add('vol', K[i][0] === 'c' ? `<rect x="${X(i) - 4}" y="${y}" width="9" height="${665 - y}" fill="${CY}"/>` : `<rect x="${X(i) - 3.5}" y="${y + .5}" width="8" height="${664 - y}" stroke="${R}"/>`); });
curve('vol', '#fff', 'H 195,253 530,253 700,248 1057,248 1165,250 1408,247 1569,238 T 600,540 650,542 720,541 760,538 800,533 G 0,208 30,211 85,214 110,211 136,205 162,196 188,180 240,146 265,135 292,121 317,112 342,118 395,115 420,124 446,112 498,115 523,120 549,129 575,148 600,142 626,130 652,132 678,112 703,94 729,94 755,89 780,91 806,103 832,124 858,121 884,130 909,124 935,121 961,112 986,115 1012,112 1038,106 1064,109 1116,109 1141,106 1167,111 1193,115 1219,121 1245,124 1296,133');
curve('vol', '#f4f400', 'H 195,253 650,252 842,247 1057,247 1110,250 1408,247 1569,241 T 600,540 700,541 760,540 800,536 G 0,217 85,216 136,205 188,196 240,178 292,157 317,145 368,133 420,121 446,113 498,116 549,124 575,130 626,124 652,127 678,120 729,118 755,109 780,112 806,109 858,106 884,109 935,109 961,115 1012,121 1038,115 1141,109 1193,112 1219,115 1245,115 1296,124');

// MACD
'339,357,375,411,429,438,447,461,473,479,476,467,476,479,488,491,491,500,509,509,494,479,464,432,411,408,405,417,426,435,453,467,488,488,488,491,497,473,467,461,461,473,470,461,447,429,412,388,372,368,360,352,348,352,362,370,380,392,405,415,425,425,430,430,440,445,454,462,470,478,485,492,495,500,505,525,540,550,555,550,557,550,540,527,515,500,482,476,473,467,456,464,488,491,500,482,455,435,414,399,402,378,369,366,351,342,348,366,408,435,426,426,423,438,447,447,458,467,470,474,485,494,509,506,506,506,497,488,476,461,456,447,435,426,420'.split(',').forEach((v, i) => add('macd', `<path d="M${X(i) + .5} 731.500V${(580 + v / 3).toFixed(1)}" stroke="${v < 455 ? R : CY}"/>`));
curve('macd', '#fff', 'H 195,346 249,340 276,352 303,358 330,361 357,367 384,376 411,385 437,391 464,394 491,388 518,397 545,403 572,412 626,424 653,433 680,445 707,451 734,451 761,445 788,442 815,421 842,403 869,397 896,388 976,394 1003,403 1030,412 1057,427 1111,439 1138,442 1165,451 1192,442 1273,442 1300,451 1327,454 1381,439 1434,412 1461,390 1488,376 1542,346 T 535,564 550,563 575,564 600,569 635,571 660,577 690,589 720,597 740,603 765,622 785,633 800,636 G 0,580 60,574 136,574 162,568 188,574 214,592 240,598 265,607 292,604 317,587 342,574 395,544 420,541 446,520 498,490 523,469 549,451 575,442 600,439 626,454 652,466 678,457 729,448 755,454 806,457 832,466 884,475 909,478 935,490 961,499 986,514 1038,526 1090,535 1116,535 1141,532 1167,526 1193,523 1219,517 1245,508 1270,499 1296,493');
curve('macd', '#f4f400', 'H 195,403 222,390 249,382 276,376 330,371 384,371 437,376 545,388 572,394 599,397 680,415 707,424 734,430 761,433 788,433 842,427 869,421 896,415 949,406 1003,403 1057,409 1138,424 1192,433 1273,436 1354,445 1408,439 1461,427 1488,415 1515,405 1569,380 T 540,573 570,569 600,569 640,571 680,580 720,588 760,605 800,620 G 0,545 30,553 85,562 188,568 214,571 265,583 292,586 342,586 395,574 446,556 498,535 549,508 600,484 626,478 703,469 729,463 780,460 832,460 884,466 935,472 986,484 1012,493 1064,505 1116,517 1141,520 1219,520 1296,511');

// SHORT: bars run from zero to the white line
const S = 'H 195,797 222,799 276,802 360,802 411,805 491,800 545,803 626,803 653,808 707,806 734,800 788,799 815,793 896,800 922,805 949,802 1030,811 1057,811 1084,808 1165,808 1192,802 1219,807 1246,805 1273,807 1300,814 1354,805 1381,799 1408,799 1461,787 1515,790 1542,784 T 530,690 545,692 600,696 630,695 660,700 700,702 740,704 770,705 800,701 G 8,802 34,808 60,802 85,814 110,818 136,818 162,790 188,840 214,906 240,857 265,894 292,793 317,733 342,747 368,730 395,715 420,780 446,668 471,711 498,720 523,674 549,677 575,730 600,802 626,900 652,906 678,793 703,843 729,799 755,877 780,880 806,853 832,904 858,874 884,861 909,865 935,909 961,901 986,948 1012,877 1038,882 1064,901 1090,829 1116,832 1141,811 1167,763 1193,793 1219,757 1245,715 1270,739 1296,721';
const sp = pts(S);
for (let i = 0; i < 135; i++) {
  const x = X(i) + .5; let k = sp.findIndex(p => p[0] >= x); if (k < 0) k = sp.length - 1; if (k < 1) k = 1;
  const [a, b] = [sp[k - 1], sp[k]], y = a[1] + (b[1] - a[1]) * Math.min(1, (x - a[0]) / (b[0] - a[0]));
  add('short', `<path d="M${x} 848.500V${y.toFixed(1)}" stroke="${y < 848.5 ? R : CY}"/>`);
}
curve('short', '#fff', S);
curve('short', '#f4f400', 'H 195,800 384,799 411,802 626,802 680,806 734,803 842,802 1003,800 1057,803 1084,806 1165,808 1381,808 1461,803 1515,800 1569,794 T 580,692 620,694 680,698 740,701 780,703 G 0,829 34,829 60,823 136,818 162,811 188,815 214,823 240,826 265,835 292,832 342,820 395,802 420,799 446,784 471,763 498,751 523,727 549,716 575,716 600,721 652,757 678,757 703,775 729,784 755,799 780,820 832,856 858,862 909,856 935,865 961,871 986,886 1038,886 1064,891 1116,880 1141,877 1219,841 1245,817 1296,787');
curve('cci', '#fff', 'H 195,1075 222,1087 249,1097 276,1117 303,1126 330,1108 357,1117 384,1157 411,1177 437,1180 464,1157 491,1108 518,1174 545,1147 572,1180 599,1192 626,1174 653,1196 680,1219 707,1213 734,1150 761,1096 788,1096 815,1021 842,1021 896,1078 922,1084 949,1096 1003,1123 1030,1141 1057,1150 1084,1174 1111,1165 1138,1183 1165,1189 1192,1133 1219,1120 1246,1132 1273,1123 1300,1171 1327,1157 1354,1096 1381,1055 1408,1037 1434,1009 1461,1015 1488,1039 1542,1060 T 525,769 536,780 544,775 560,784 574,778 585,795 597,783 612,779 625,767 634,767 648,794 661,799 679,818 696,802 705,808 717,797 733,810 760,810 785,802 797,800 806,795 816,782 823,798 G 0,1160 34,1157 60,1150 85,1157 110,1186 136,1192 162,1150 188,1189 214,1258 240,1237 265,1213 292,1174 317,1138 342,1124 368,1112 395,1090 420,1112 446,1067 471,1064 498,1075 523,1057 549,1054 575,1075 600,1094 626,1144 652,1174 678,1123 703,1105 729,1108 755,1142 780,1174 806,1114 832,1174 1090,1168 1116,1157 1141,1160 1167,1141 1193,1129 1219,1120 1245,1087 1270,1064 1296,1064');
</script>
</body>
</html>
